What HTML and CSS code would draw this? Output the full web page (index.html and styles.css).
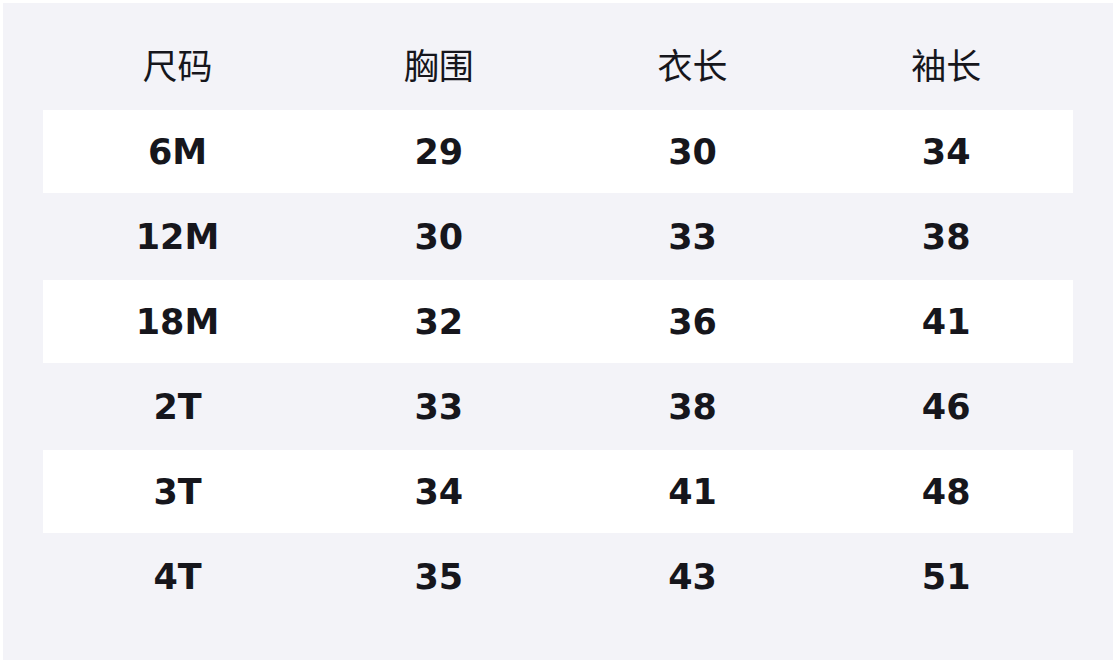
FILE: index.html
```html
<!DOCTYPE html>
<html lang="zh">
<head>
<meta charset="utf-8">
<link rel="stylesheet" href="styles.css">
</head>
<body>
<div class="panel">
  <div class="table">
    <div class="row head">
      <div>尺码</div><div>胸围</div><div>衣长</div><div>袖长</div>
    </div>
    <div class="row alt"><div>6M</div><div>29</div><div>30</div><div>34</div></div>
    <div class="row"><div>12M</div><div>30</div><div>33</div><div>38</div></div>
    <div class="row alt"><div>18M</div><div>32</div><div>36</div><div>41</div></div>
    <div class="row"><div>2T</div><div>33</div><div>38</div><div>46</div></div>
    <div class="row alt"><div>3T</div><div>34</div><div>41</div><div>48</div></div>
    <div class="row"><div>4T</div><div>35</div><div>43</div><div>51</div></div>
  </div>
</div>
</body>
</html>
```
FILE: styles.css
```css
html, body {
  margin: 0;
  background: #ffffff;
}
body {
  padding: 3px;
  width: 1110px;
}
.panel {
  background: #f3f3f8;
  height: 657px;
  box-sizing: border-box;
  padding: 22px 40px 0;
}
.table {
  display: flex;
  flex-direction: column;
  gap: 2px;
}
.row {
  display: grid;
  grid-template-columns: 269px 1fr 1fr 1fr;
  height: 83px;
  align-items: center;
  text-align: center;
  color: #16161c;
  font-family: "DejaVu Sans", "Noto Sans CJK SC", sans-serif;
  font-weight: bold;
  font-size: 35px;
}
.row.alt {
  background: #ffffff;
}
.row.head {
  font-family: "Noto Sans CJK SC", sans-serif;
  font-weight: normal;
  font-size: 35px;
  box-sizing: border-box;
  padding-bottom: 6px;
}
```
